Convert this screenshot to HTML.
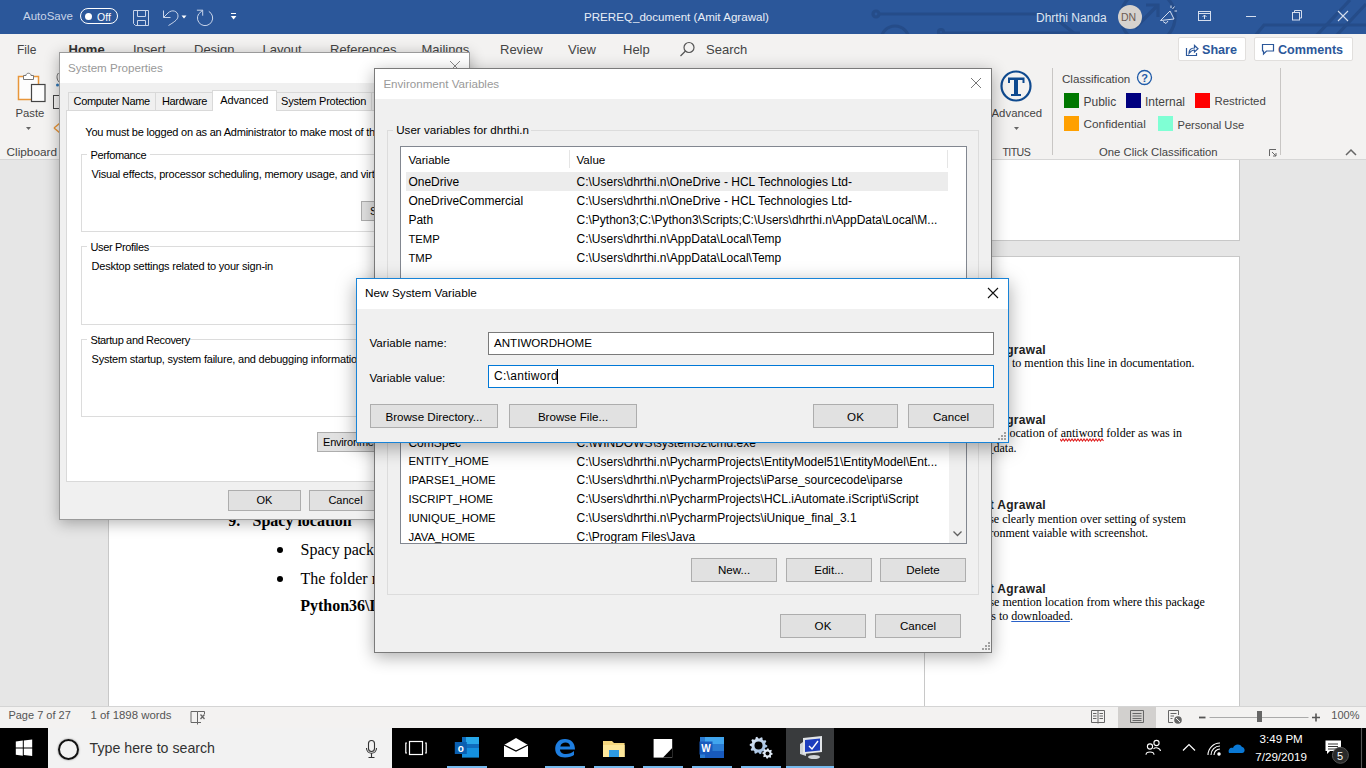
<!DOCTYPE html>
<html><head><meta charset="utf-8">
<style>
*{margin:0;padding:0;box-sizing:border-box}
html,body{width:1366px;height:768px;overflow:hidden;background:#e6e6e6;font-family:"Liberation Sans",sans-serif;position:relative}
.a{position:absolute}
.t{position:absolute;white-space:nowrap;line-height:1}
</style></head><body>
<div class="a" style="left:0px;top:0px;width:1366px;height:34px;background:#2b579a"></div>
<div class="a" style="left:0px;top:34px;width:1366px;height:126px;background:#f3f2f1"></div>
<div class="a" style="left:0px;top:160px;width:1366px;height:546px;background:#e6e6e6"></div>
<div class="a" style="left:0px;top:706px;width:1366px;height:22px;background:#f3f2f1;border-top:1px solid #d4d4d4"></div>
<div class="a" style="left:0px;top:728px;width:1366px;height:40px;background:#000"></div>
<svg class="a" style="left:0;top:0" width="1366" height="34" viewBox="0 0 1366 34">
<g stroke="#254c89" stroke-width="3.2" fill="none">
<circle cx="876" cy="14" r="3"/><path d="M879 14 H1050 L1075 34"/>
<circle cx="895" cy="40" r="14"/>
<circle cx="941" cy="32" r="2.5"/><path d="M943 33 H1080"/>
<circle cx="1148" cy="17" r="27"/>
<path d="M1135 28 L1158 5 M1146 5 H1158 V17"/>
<path d="M1255 36 L1264 25 H1366"/>
<path d="M1316 36 L1350 0 M1336 36 L1366 4"/>
</g></svg>
<div class="t" style="left:23px;top:11.27px;font-size:11.5px;color:#c8d4e8;">AutoSave</div>
<div class="a" style="left:80px;top:8px;width:38px;height:16px;border:1.5px solid #fff;border-radius:8px"></div>
<div class="a" style="left:84.5px;top:12.5px;width:7px;height:7px;background:#fff;border-radius:50%"></div>
<div class="t" style="left:97px;top:11.61px;font-size:10.5px;color:#fff;">Off</div>
<svg class="a" style="left:0;top:0" width="260" height="34" viewBox="0 0 260 34" fill="none" stroke="#c9d5ea" stroke-width="1">
<path d="M133.5 10.5 H148.5 V25.5 H135.5 L133.5 23.5 Z"/><path d="M137.5 10.5 V16.5 H145.5 V10.5"/><path d="M137.5 25.5 V20.5 H145.5 V25.5"/>
<path d="M163.5 10.5 V17.5 H170.5" /><path d="M163.5 17.5 L168 13 C172 9 178 11 178 16 C178 19 176 21 168.5 25.5"/>
<path d="M181.5 15.5 H186.5 L184 18.5 Z" fill="#fff" stroke="none"/>
<path d="M208.8 11.4 A7.6 7.6 0 1 1 198.6 14 L202.7 10.2"/><path d="M196.9 10.2 H202.7 V15.7"/>
<path d="M231 13.5 H236" stroke="#fff"/><path d="M230.8 16 H236.4 L233.6 19.5 Z" fill="#fff" stroke="none"/>
</svg>
<div class="t" style="left:584px;top:11.18px;font-size:11.6px;color:#e8eef7;">PREREQ_document (Amit Agrawal)</div>
<div class="t" style="left:1036px;top:11.54px;font-size:12px;color:#dfe6f2;">Dhrthi Nanda</div>
<div class="a" style="left:1118px;top:5px;width:24px;height:24px;border-radius:50%;background:#d6d2ce"></div>
<div class="t" style="left:1121px;top:12.11px;font-size:10.5px;color:#6b5b55;">DN</div>
<svg class="a" style="left:1150;top:0;left:1150px" width="216" height="34" viewBox="1150 0 216 34" fill="none" stroke="#d5deee" stroke-width="1">
<path d="M1160.5 20.5 L1170 11 L1174 19 Z M1163 21.5 L1166 23.5 L1168 21"/><path d="M1172.5 9 L1174.5 6.5 M1174.5 11 H1177 M1171 8 V5.5"/>
<rect x="1198.5" y="11.5" width="12" height="9"/><path d="M1198.5 13.5 H1210.5 M1204.5 19 V15 M1202.5 17 L1204.5 15 L1206.5 17"/>
<path d="M1246 16.5 H1256"/>
<rect x="1292.5" y="12.5" width="7" height="7.5"/><path d="M1294.5 12.5 V10.5 H1301.5 V18 H1299.5"/>
<path d="M1338 11 L1348 21 M1348 11 L1338 21" stroke-width="1.1"/>
</svg>
<div class="t" style="left:17px;top:43.84px;font-size:12px;color:#444;">File</div>
<div class="t" style="left:68.5px;top:43.00px;font-size:13px;color:#333;font-weight:700;">Home</div>
<div class="t" style="left:133px;top:43.00px;font-size:13px;color:#444;">Insert</div>
<div class="t" style="left:194px;top:43.00px;font-size:13px;color:#444;">Design</div>
<div class="t" style="left:262.5px;top:43.00px;font-size:13px;color:#444;">Layout</div>
<div class="t" style="left:330px;top:43.00px;font-size:13px;color:#444;">References</div>
<div class="t" style="left:421.5px;top:43.00px;font-size:13px;color:#444;">Mailings</div>
<div class="t" style="left:500px;top:43.00px;font-size:13px;color:#444;">Review</div>
<div class="t" style="left:568px;top:43.00px;font-size:13px;color:#444;">View</div>
<div class="t" style="left:623px;top:43.00px;font-size:13px;color:#444;">Help</div>
<div class="t" style="left:706px;top:43.00px;font-size:13px;color:#444;">Search</div>
<svg class="a" style="left:676px;top:40px" width="24" height="20" viewBox="676 40 24 20" fill="none" stroke="#555" stroke-width="1.2">
<circle cx="689" cy="47.5" r="5"/><path d="M685.5 51 L680.5 56"/></svg>
<div class="a" style="left:1178px;top:37px;width:68px;height:24px;background:#fff;border:1px solid #e1dfdd;border-radius:2px"></div>
<div class="a" style="left:1254px;top:37px;width:99px;height:24px;background:#fff;border:1px solid #e1dfdd;border-radius:2px"></div>
<div class="t" style="left:1202px;top:43.83px;font-size:12.6px;color:#2b579a;font-weight:700;">Share</div>
<div class="t" style="left:1278px;top:43.83px;font-size:12.6px;color:#2b579a;font-weight:700;">Comments</div>
<svg class="a" style="left:1180px;top:38px" width="100" height="24" viewBox="1180 38 100 24" fill="none" stroke="#2b579a" stroke-width="1.2">
<path d="M1186.5 48 V55.5 H1196.5 V53"/><path d="M1189 53.5 C1189 50 1191 48 1194.5 48 V45.5 L1198 48.8 L1194.5 52 V50 C1192 50 1190.5 51.5 1189 53.5 Z"/>
<path d="M1262.5 44.5 H1273.5 V51 H1266.5 L1263.5 54 V51 H1262.5 Z"/></svg>
<svg class="a" style="left:0;top:66px" width="60" height="94" viewBox="0 66 60 94">
<rect x="18.5" y="76.5" width="20" height="23" fill="#fdfdfd" stroke="#e8963a" stroke-width="1.5"/>
<path d="M23.5 79.5 V75.5 H26 C26 72.5 31 72.5 31 75.5 H33.5 V79.5 Z" fill="#fff" stroke="#777" stroke-width="1"/>
<rect x="31.5" y="84.5" width="13.5" height="17" fill="#fdfdfd" stroke="#444" stroke-width="1.2"/>
<path d="M26 127 H31 L28.5 130 Z" fill="#666"/>
<circle cx="57.5" cy="85" r="1.5" fill="#2e75b6"/><path d="M58.5 73 C56 76 57 80 59 82" stroke="#666" fill="none"/>
<rect x="53.5" y="95.5" width="8" height="13" fill="none" stroke="#444"/>
<path d="M54 128 L60 123 M54 128 L60 133" stroke="#e8963a" stroke-width="1.5" fill="none"/>
</svg>
<div class="t" style="left:15.5px;top:108.43px;font-size:11.3px;color:#444;">Paste</div>
<div class="t" style="left:6.5px;top:147.31px;font-size:11.8px;color:#444;">Clipboard</div>
<svg class="a" style="left:995px;top:66px" width="45" height="70" viewBox="995 66 45 70">
<circle cx="1016" cy="86" r="14.5" fill="none" stroke="#0f4a8f" stroke-width="2.2"/>
<path d="M1008 77.5 H1024.5 V83 H1022.5 V80 H1018 V94 H1021 V96 H1011 V94 H1014 V80 H1010 V83 H1008 Z" fill="#0f4a8f"/>
<path d="M1014 127 H1019 L1016.5 130 Z" fill="#666"/></svg>
<div class="t" style="left:991.5px;top:108.35px;font-size:11.4px;color:#444;">Advanced</div>
<div class="t" style="left:1002.5px;top:147.33px;font-size:10.6px;color:#444;letter-spacing:-0.6px;">TITUS</div>
<div class="a" style="left:1052px;top:68px;width:1px;height:87px;background:#c8c6c4"></div>
<div class="t" style="left:1062px;top:73.18px;font-size:11.6px;color:#444;">Classification</div>
<svg class="a" style="left:1135px;top:68px" width="20" height="20" viewBox="1135 68 20 20"><circle cx="1144.5" cy="77.5" r="7" fill="none" stroke="#1e5aa8" stroke-width="1.3"/>
<text x="1144.5" y="81.5" font-family="Liberation Sans" font-size="11" font-weight="700" fill="#1e5aa8" text-anchor="middle">?</text></svg>
<div class="a" style="left:1064px;top:93px;width:15px;height:15px;background:#007800"></div>
<div class="t" style="left:1083.5px;top:95.84px;font-size:12px;color:#444;">Public</div>
<div class="a" style="left:1126px;top:93px;width:15px;height:15px;background:#00007f"></div>
<div class="t" style="left:1145px;top:95.84px;font-size:12px;color:#444;">Internal</div>
<div class="a" style="left:1195px;top:93px;width:15px;height:15px;background:#ff0000"></div>
<div class="t" style="left:1214.5px;top:96.35px;font-size:11.4px;color:#444;">Restricted</div>
<div class="a" style="left:1064px;top:116px;width:15px;height:15px;background:#ffa000"></div>
<div class="t" style="left:1083.5px;top:119.01px;font-size:11.8px;color:#444;">Confidential</div>
<div class="a" style="left:1158px;top:116px;width:15px;height:15px;background:#7fffd4"></div>
<div class="t" style="left:1177.5px;top:119.60px;font-size:11.1px;color:#444;">Personal Use</div>
<div class="t" style="left:1099px;top:146.73px;font-size:11.3px;color:#444;">One Click Classification</div>
<svg class="a" style="left:1266px;top:146px" width="100" height="14" viewBox="1266 146 100 14" fill="none" stroke="#666">
<path d="M1269.5 156 V149.5 H1276"/><path d="M1272 152 L1276 156 M1276 153 V156 H1273"/>
<path d="M1346 155 L1351 150 L1356 155" stroke-width="1.5"/></svg>
<div class="a" style="left:1280px;top:68px;width:1px;height:87px;background:#c8c6c4"></div>
<div class="a" style="left:0px;top:159px;width:1366px;height:1px;background:#d6d6d6"></div>
<div class="a" style="left:108px;top:160px;width:1132px;height:81px;background:#fff;border-left:1px solid #c8c8c8;border-right:1px solid #c8c8c8;border-bottom:1px solid #c8c8c8"></div>
<div class="a" style="left:108px;top:256px;width:1132px;height:450px;background:#fff;border-left:1px solid #c8c8c8;border-right:1px solid #c8c8c8;border-top:1px solid #c8c8c8"></div>
<div class="a" style="left:924px;top:256px;width:1px;height:450px;background:#c8c8c8"></div>
<div class="t" style="left:228.3px;top:512.70px;font-size:16px;color:#000;font-weight:700;font-family:'Liberation Serif',serif;">9.</div>
<div class="t" style="left:252.5px;top:512.70px;font-size:16px;color:#000;font-weight:700;font-family:'Liberation Serif',serif;">Spacy location</div>
<div class="a" style="left:276.5px;top:547.3px;width:6px;height:6px;background:#000;border-radius:50%"></div>
<div class="a" style="left:276.5px;top:576.2px;width:6px;height:6px;background:#000;border-radius:50%"></div>
<div class="t" style="left:300.6px;top:542.10px;font-size:16px;color:#000;font-family:'Liberation Serif',serif;">Spacy package</div>
<div class="t" style="left:300.6px;top:570.50px;font-size:16px;color:#000;font-family:'Liberation Serif',serif;">The folder name</div>
<div class="t" style="left:300.2px;top:597.90px;font-size:16px;color:#000;font-weight:700;font-family:'Liberation Serif',serif;">Python36\Lib</div>
<div class="t" style="right:320px;top:344.04px;font-size:12px;color:#222;font-weight:700;letter-spacing:0.3px;">Amit Agrawal</div>
<div class="t" style="right:320px;top:413.94px;font-size:12px;color:#222;font-weight:700;letter-spacing:0.3px;">Amit Agrawal</div>
<div class="t" style="right:320px;top:498.84px;font-size:12px;color:#222;font-weight:700;letter-spacing:0.3px;">Amit Agrawal</div>
<div class="t" style="right:320px;top:582.64px;font-size:12px;color:#222;font-weight:700;letter-spacing:0.3px;">Amit Agrawal</div>
<div class="t" style="right:171.4000000000001px;top:357.25px;font-size:12px;color:#000;font-family:'Liberation Serif',serif;">Need to mention this line in documentation.</div>
<div class="t" style="right:184px;top:427.15px;font-size:12px;color:#000;font-family:'Liberation Serif',serif;">Please mention location of antiword folder as was in</div>
<div class="t" style="left:987.5px;top:441.55px;font-size:12px;color:#000;font-family:'Liberation Serif',serif;">_data.</div>
<div class="t" style="right:180.20000000000005px;top:512.55px;font-size:12px;color:#000;font-family:'Liberation Serif',serif;">Please clearly mention over setting of system</div>
<div class="t" style="right:218px;top:526.65px;font-size:12px;color:#000;font-family:'Liberation Serif',serif;">environment vaiable with screenshot.</div>
<div class="t" style="right:161.29999999999995px;top:596.15px;font-size:12px;color:#000;font-family:'Liberation Serif',serif;">Please mention location from where this package</div>
<div class="t" style="right:293.0999999999999px;top:610.25px;font-size:12px;color:#000;font-family:'Liberation Serif',serif;">needs to <u style="text-decoration-color:#2a62c9">downloaded</u>.</div>
<svg class="a" style="left:1060px;top:437px" width="45" height="5" viewBox="0 0 45 5"><path d="M0 2 L1.5 4 L3 2 L4.5 4 L6 2 L7.5 4 L9 2 L10.5 4 L12 2 L13.5 4 L15 2 L16.5 4 L18 2 L19.5 4 L21 2 L22.5 4 L24 2 L25.5 4 L27 2 L28.5 4 L30 2 L31.5 4 L33 2 L34.5 4 L36 2 L37.5 4 L39 2 L40.5 4 L42 2 L43.5 4" stroke="#e02020" stroke-width="1.2" fill="none"/></svg>
<div class="t" style="left:8.4px;top:710.19px;font-size:11px;color:#555;">Page 7 of 27</div>
<div class="t" style="left:90.5px;top:709.85px;font-size:11.4px;color:#555;">1 of 1898 words</div>
<svg class="a" style="left:185px;top:706px" width="30" height="22" viewBox="185 706 30 22" fill="none" stroke="#666">
<path d="M191 711.5 H197.5 V722.5 H191 Z M197.5 711.5 H204.5 V714 M197.5 722.5 H201 M197.5 722.5 V724.5"/><path d="M200.5 714.5 L204.5 719 M204.5 714.5 L200.5 719" stroke-width="1.3"/></svg>
<div class="a" style="left:1118px;top:707px;width:38px;height:21px;background:#d2d0ce"></div>
<svg class="a" style="left:1085px;top:706px" width="281" height="22" viewBox="1085 706 281 22" fill="none" stroke="#666" stroke-width="1">
<path d="M1091.5 710.5 H1104.5 V722.5 H1091.5 Z M1098 710.5 V723.5 M1093 713.5 H1096.5 M1093 716 H1096.5 M1093 718.5 H1096.5 M1099.5 713.5 H1103 M1099.5 716 H1103 M1099.5 718.5 H1103"/>
<path d="M1130.5 710.5 H1143.5 V722.5 H1130.5 Z M1132.5 713.5 H1141.5 M1132.5 716 H1141.5 M1132.5 718.5 H1141.5 M1132.5 720.5 H1141.5"/>
<path d="M1168.5 710.5 H1178.5 V715 M1168.5 710.5 V722.5 H1173 M1170.5 713.5 H1176.5 M1170.5 716 H1174 M1170.5 718.5 H1172.5"/>
<circle cx="1178" cy="720" r="3.8" fill="#666" stroke="none"/><path d="M1176 718 L1180 722" stroke="#f3f2f1"/>
<path d="M1199 717.5 H1205.5" stroke-width="1.8" stroke="#555"/>
<path d="M1209.5 717.5 H1308.5" stroke="#aaa"/>
<path d="M1312 717.5 H1320 M1316 713.5 V721.5" stroke-width="1.6" stroke="#555"/>
</svg>
<div class="a" style="left:1257px;top:711px;width:5px;height:11px;background:#666"></div>
<div class="t" style="left:1331.3px;top:710.49px;font-size:11px;color:#555;">100%</div>
<svg class="a" style="left:0;top:728px" width="60" height="40" viewBox="0 728 60 40" fill="#fff">
<path d="M15.8 741.5 L22.8 740.5 V747.6 H15.8 Z M23.8 740.4 L32.2 739.4 V747.6 H23.8 Z M15.8 748.6 H22.8 V755.7 L15.8 754.7 Z M23.8 748.6 H32.2 V756 L23.8 754.9 Z"/></svg>
<div class="a" style="left:48px;top:728px;width:344px;height:40px;background:#f2f2f2"></div>
<div class="a" style="left:57.5px;top:738.5px;width:21px;height:21px;border-radius:50%;border:2.6px solid #111;box-shadow:0 0 2px rgba(0,0,0,.5)"></div>
<div class="t" style="left:89.6px;top:741.48px;font-size:14.2px;color:#333;">Type here to search</div>
<svg class="a" style="left:360px;top:736px" width="24" height="24" viewBox="360 736 24 24" fill="none" stroke="#333" stroke-width="1.1">
<rect x="368.5" y="740.5" width="6" height="11" rx="3"/><path d="M366.5 748 C366.5 755 376.5 755 376.5 748 M371.5 753.5 V757.5 M368.5 757.5 H374.5"/></svg>
<svg class="a" style="left:395px;top:728px" width="450" height="40" viewBox="395 728 450 40">
<g fill="none" stroke="#fff" stroke-width="1.2"><rect x="409.5" y="741.5" width="13" height="13"/><path d="M407 743 H405.8 V753 H407 M425 743 H426.2 V753 H425"/></g>
<rect x="462" y="737" width="17" height="20" fill="#0f6cbd"/><rect x="466" y="737" width="13" height="7" fill="#28a8ea"/><path d="M462 748 L479 748 L479 757.6 L462 757.6 Z" fill="#1490df"/>
<rect x="454.8" y="742" width="12" height="12" fill="#0a5fb0"/><text x="460.8" y="752" font-family="Liberation Sans" font-size="10" font-weight="700" fill="#fff" text-anchor="middle">o</text>
<path d="M504 745 L516 738 L528 745 V757 H504 Z" fill="#fff"/><path d="M504 745 L516 751 L528 745" stroke="#000" stroke-width="1.2" fill="none"/>
<path d="M565 739 C558 739 555.2 744 555.2 749 C555.2 754 559 757.5 565 757.5 C569 757.5 572 756.5 574 755 V751 C572 753 569 754 566 754 C562 754 560 752 560 749.5 H575 C575 743 571 739 565 739 Z M560.3 746.5 C561 743.5 563 742.5 565.5 742.5 C568 742.5 570 743.8 570 746.5 Z" fill="#1e7ee0"/>
<path d="M603 741 H612 L614 743 H624.6 V757 H603 Z" fill="#f5d77e"/><path d="M603 745 H624.6 V757 H603 Z" fill="#fde79a"/><rect x="609" y="750" width="10" height="7" fill="#2d9be3"/>
<rect x="653.6" y="739" width="18.6" height="18.6" fill="#fff"/><path d="M672.2 748 L663 757.6 H672.2 Z" fill="#000"/>
<rect x="700" y="737" width="24" height="21" fill="#2b7cd3"/><rect x="705" y="737" width="19" height="7" fill="#41a5ee"/><rect x="705" y="751" width="19" height="7" fill="#185abd"/>
<rect x="699.5" y="741.5" width="13" height="13" fill="#185abd"/><text x="706" y="752" font-family="Liberation Sans" font-size="10" font-weight="700" fill="#fff" text-anchor="middle">W</text>
</g>
<g><defs><linearGradient id="gg" x1="0" y1="0" x2="1" y2="1"><stop offset="0" stop-color="#e6eef7"/><stop offset="1" stop-color="#8fb3dc"/></linearGradient></defs><path d="M767.30 745.50 L767.19 746.88 L765.16 747.66 L764.74 748.68 L765.62 750.67 L764.72 751.72 L762.61 751.16 L761.68 751.74 L761.22 753.87 L759.88 754.19 L758.50 752.50 L757.40 752.41 L755.78 753.87 L754.50 753.34 L754.39 751.16 L753.55 750.45 L751.38 750.67 L750.66 749.50 L751.84 747.66 L751.59 746.60 L749.70 745.50 L749.81 744.12 L751.84 743.34 L752.26 742.32 L751.38 740.33 L752.28 739.28 L754.39 739.84 L755.32 739.26 L755.78 737.13 L757.12 736.81 L758.50 738.50 L759.60 738.59 L761.22 737.13 L762.50 737.66 L762.61 739.84 L763.45 740.55 L765.62 740.33 L766.34 741.50 L765.16 743.34 L765.41 744.40 Z" fill="url(#gg)"/><circle cx="758.5" cy="745.5" r="4" fill="#000"/><path d="M772.70 753.50 L772.60 754.51 L771.20 755.03 L770.83 755.72 L771.18 757.18 L770.39 757.82 L769.03 757.20 L768.28 757.42 L767.50 758.70 L766.49 758.60 L765.97 757.20 L765.28 756.83 L763.82 757.18 L763.18 756.39 L763.80 755.03 L763.58 754.28 L762.30 753.50 L762.40 752.49 L763.80 751.97 L764.17 751.28 L763.82 749.82 L764.61 749.18 L765.97 749.80 L766.72 749.58 L767.50 748.30 L768.51 748.40 L769.03 749.80 L769.72 750.17 L771.18 749.82 L771.82 750.61 L771.20 751.97 L771.42 752.72 Z" fill="#dfe9f4"/><circle cx="767.5" cy="753.5" r="2" fill="#000"/></g>
</svg>
<div class="a" style="left:786px;top:728px;width:48px;height:40px;background:#393b3d"></div>
<svg class="a" style="left:795px;top:734px" width="30" height="28" viewBox="795 734 30 28">
<path d="M800 744 L806 740 V756 L800 754 Z" fill="#cfd3d6"/><path d="M803 738 L822 736 V752 L803 754 Z" fill="#e2e5e8"/><path d="M805 740 L820 738.5 V750.5 L805 752 Z" fill="#1c3dbd"/>
<path d="M809 746 L812 749 L818 741" stroke="#fff" stroke-width="1.4" fill="none"/><ellipse cx="814" cy="757" rx="6" ry="2" fill="#d0d3d6"/></svg>
<div class="a" style="left:447px;top:766px;width:40px;height:2px;background:#76b9ed"></div>
<div class="a" style="left:545px;top:766px;width:40px;height:2px;background:#76b9ed"></div>
<div class="a" style="left:594px;top:766px;width:40px;height:2px;background:#76b9ed"></div>
<div class="a" style="left:643px;top:766px;width:40px;height:2px;background:#76b9ed"></div>
<div class="a" style="left:692px;top:766px;width:40px;height:2px;background:#76b9ed"></div>
<div class="a" style="left:741px;top:766px;width:40px;height:2px;background:#76b9ed"></div>
<div class="a" style="left:786px;top:766px;width:48px;height:2px;background:#76b9ed"></div>
<svg class="a" style="left:1140px;top:728px" width="226" height="40" viewBox="1140 728 226 40" fill="none" stroke="#fff" stroke-width="1.1">
<circle cx="1150" cy="746.5" r="2.6"/><path d="M1146 754.8 C1146 751 1154 751 1154 754.8"/><circle cx="1156.5" cy="743" r="2.6"/><path d="M1153.5 749 C1155 747 1160 747.5 1160.5 751"/>
<path d="M1183 750.5 L1189 744.5 L1195 750.5" stroke-width="1.2"/>
<path d="M1208 755 A12 12 0 0 1 1220 743 M1211 755 A9 9 0 0 1 1220 746 M1214 755 A6 6 0 0 1 1220 749"/><circle cx="1219" cy="754" r="1.2" fill="#fff"/>
<path d="M1229 753 C1227.5 749 1231 747 1233 748 C1234 744 1240 743 1242 747 C1245 747 1246 753 1242 753 Z" fill="#0a78d4" stroke="none"/>
<path d="M1325.5 740.5 H1341 V751 H1330 L1327 754 V751 H1325.5 Z" fill="#fff" stroke="none"/><path d="M1328 744 H1338 M1328 746.5 H1338 M1328 749 H1336" stroke="#000" stroke-width="0.8"/>
<circle cx="1340.4" cy="755.3" r="8" fill="#2a2a2a" stroke="#555" stroke-width="1"/>
<path d="M1361.5 728 V768" stroke="#555"/>
</svg>
<div class="t" style="left:1336.9px;top:751.19px;font-size:11px;color:#fff;">5</div>
<div class="t" style="left:1259.6px;top:732.88px;font-size:11.6px;color:#fff;">3:49 PM</div>
<div class="t" style="left:1255.3px;top:750.98px;font-size:11.6px;color:#fff;">7/29/2019</div>
<div class="a" style="left:59px;top:52px;width:411px;height:468px;background:#f0f0f0;border:1px solid #9a9a9a;box-shadow:0 3px 14px rgba(0,0,0,.30)"></div>
<div class="a" style="left:60px;top:53px;width:409px;height:30px;background:#fff"></div>
<div class="t" style="left:68.1px;top:62.08px;font-size:11.6px;color:#999;">System Properties</div>
<svg class="a" style="left:445px;top:56px" width="20" height="20" viewBox="445 56 20 20"><path d="M450 61 L460 71 M460 61 L450 71" stroke="#888" stroke-width="1"/></svg>
<div class="a" style="left:68px;top:92px;width:88px;height:19px;background:#f0f0f0;border:1px solid #d9d9d9;border-bottom:none"></div>
<div class="a" style="left:155px;top:92px;width:58px;height:19px;background:#f0f0f0;border:1px solid #d9d9d9;border-bottom:none"></div>
<div class="a" style="left:276px;top:92px;width:96px;height:19px;background:#f0f0f0;border:1px solid #d9d9d9;border-bottom:none"></div>
<div class="a" style="left:371px;top:92px;width:70px;height:19px;background:#f0f0f0;border:1px solid #d9d9d9;border-bottom:none"></div>
<div class="a" style="left:66px;top:110px;width:396px;height:372px;background:#fff;border:1px solid #d9d9d9"></div>
<div class="a" style="left:212px;top:90px;width:65px;height:21px;background:#fff;border:1px solid #d9d9d9;border-bottom:none"></div>
<div class="t" style="left:73.6px;top:96.29px;font-size:11px;color:#000;letter-spacing:-0.35px;">Computer Name</div>
<div class="t" style="left:161.9px;top:96.29px;font-size:11px;color:#000;letter-spacing:-0.3px;">Hardware</div>
<div class="t" style="left:220.2px;top:94.69px;font-size:11px;color:#000;letter-spacing:-0.1px;">Advanced</div>
<div class="t" style="left:281.1px;top:96.29px;font-size:11px;color:#000;letter-spacing:-0.25px;">System Protection</div>
<div class="t" style="left:376px;top:96.29px;font-size:11px;color:#000;letter-spacing:-0.25px;">Remote</div>
<div class="t" style="left:85.3px;top:126.89px;font-size:11px;color:#000;letter-spacing:-0.22px;">You must be logged on as an Administrator to make most of these changes.</div>
<div class="a" style="left:81px;top:154px;width:374px;height:78px;border:1px solid #dcdcdc"></div>
<div class="a" style="left:87.4px;top:151px;width:63px;height:6px;background:#fff"></div>
<div class="t" style="left:90.4px;top:150.39px;font-size:11px;color:#000;letter-spacing:-0.35px;">Perfomance</div>
<div class="t" style="left:91.6px;top:168.59px;font-size:11px;color:#000;letter-spacing:-0.22px;">Visual effects, processor scheduling, memory usage, and virtual memory</div>
<div class="a" style="left:361px;top:201px;width:75px;height:20px;background:#e1e1e1;border:1px solid #adadad"></div>
<div class="t" style="left:370px;top:206.19px;font-size:11px;color:#000;">Settings...</div>
<div class="a" style="left:81px;top:246px;width:374px;height:79px;border:1px solid #dcdcdc"></div>
<div class="a" style="left:87.4px;top:243px;width:63px;height:6px;background:#fff"></div>
<div class="t" style="left:90.4px;top:241.69px;font-size:11px;color:#000;letter-spacing:-0.35px;">User Profiles</div>
<div class="t" style="left:91.6px;top:261.29px;font-size:11px;color:#000;letter-spacing:-0.22px;">Desktop settings related to your sign-in</div>
<div class="a" style="left:81px;top:339px;width:374px;height:78px;border:1px solid #dcdcdc"></div>
<div class="a" style="left:87.4px;top:336px;width:102px;height:6px;background:#fff"></div>
<div class="t" style="left:90.4px;top:334.69px;font-size:11px;color:#000;letter-spacing:-0.35px;">Startup and Recovery</div>
<div class="t" style="left:91.6px;top:354.39px;font-size:11px;color:#000;letter-spacing:-0.22px;">System startup, system failure, and debugging information</div>
<div class="a" style="left:317px;top:432px;width:119px;height:20px;background:#e1e1e1;border:1px solid #adadad"></div>
<div class="t" style="left:323px;top:437.19px;font-size:11px;color:#000;letter-spacing:-0.2px;">Environment Variables...</div>
<div class="a" style="left:228px;top:490px;width:73px;height:21px;background:#e1e1e1;border:1px solid #adadad"></div>
<div class="t" style="left:228px;width:73px;text-align:center;top:495.49px;font-size:11px;color:#000">OK</div>
<div class="a" style="left:309px;top:490px;width:73px;height:21px;background:#e1e1e1;border:1px solid #adadad"></div>
<div class="t" style="left:309px;width:73px;text-align:center;top:495.49px;font-size:11px;color:#000">Cancel</div>
<div class="a" style="left:390px;top:490px;width:73px;height:21px;background:#e1e1e1;border:1px solid #adadad"></div>
<div class="t" style="left:390px;width:73px;text-align:center;top:495.49px;font-size:11px;color:#000">Apply</div>
<div class="a" style="left:374px;top:68px;width:618px;height:585px;background:#f0f0f0;border:1px solid #7a7a7a;box-shadow:0 4px 16px rgba(0,0,0,.32)"></div>
<div class="a" style="left:375px;top:69px;width:616px;height:30px;background:#fff"></div>
<div class="t" style="left:383.4px;top:77.68px;font-size:11.6px;color:#999;">Environment Variables</div>
<svg class="a" style="left:966px;top:73px" width="20" height="20" viewBox="966 73 20 20"><path d="M971 78 L981 88 M981 78 L971 88" stroke="#777" stroke-width="1"/></svg>
<div class="a" style="left:387px;top:130px;width:592px;height:192px;border:1px solid #dcdcdc"></div>
<div class="a" style="left:393.25px;top:127px;width:138px;height:7px;background:#f0f0f0"></div>
<div class="t" style="left:396.25px;top:123.78px;font-size:11.6px;color:#000;">User variables for dhrthi.n</div>
<div class="a" style="left:400px;top:146px;width:567px;height:160px;background:#fff;border:1px solid #828790"></div>
<div class="a" style="left:569px;top:150px;width:1px;height:18px;background:#e5e5e5"></div>
<div class="a" style="left:947px;top:150px;width:1px;height:18px;background:#e5e5e5"></div>
<div class="t" style="left:408.4px;top:154.48px;font-size:11.6px;color:#000;">Variable</div>
<div class="t" style="left:576.5px;top:154.48px;font-size:11.6px;color:#000;">Value</div>
<div class="a" style="left:406px;top:172px;width:542px;height:19px;background:#ececec"></div>
<div class="t" style="left:408.4px;top:176.24px;font-size:12px;color:#000;">OneDrive</div>
<div class="t" style="left:576.5px;top:176.24px;font-size:12px;color:#000;">C:\Users\dhrthi.n\OneDrive - HCL Technologies Ltd-</div>
<div class="t" style="left:408.4px;top:195.24px;font-size:12px;color:#000;">OneDriveCommercial</div>
<div class="t" style="left:576.5px;top:195.24px;font-size:12px;color:#000;">C:\Users\dhrthi.n\OneDrive - HCL Technologies Ltd-</div>
<div class="t" style="left:408.4px;top:214.24px;font-size:12px;color:#000;">Path</div>
<div class="t" style="left:576.5px;top:214.24px;font-size:12px;color:#000;">C:\Python3;C:\Python3\Scripts;C:\Users\dhrthi.n\AppData\Local\M...</div>
<div class="t" style="left:408.4px;top:233.83px;font-size:11.3px;color:#000;">TEMP</div>
<div class="t" style="left:576.5px;top:233.24px;font-size:12px;color:#000;">C:\Users\dhrthi.n\AppData\Local\Temp</div>
<div class="t" style="left:408.4px;top:252.83px;font-size:11.3px;color:#000;">TMP</div>
<div class="t" style="left:576.5px;top:252.24px;font-size:12px;color:#000;">C:\Users\dhrthi.n\AppData\Local\Temp</div>
<div class="a" style="left:387px;top:330px;width:592px;height:265px;border:1px solid #dcdcdc"></div>
<div class="a" style="left:393.25px;top:327px;width:95px;height:7px;background:#f0f0f0"></div>
<div class="t" style="left:396.25px;top:323.78px;font-size:11.6px;color:#000;">System variables</div>
<div class="a" style="left:400px;top:347px;width:567px;height:197px;background:#fff;border:1px solid #828790"></div>
<div class="a" style="left:949px;top:348px;width:17px;height:195px;background:#f0f0f0"></div>
<svg class="a" style="left:949px;top:525px" width="17" height="17" viewBox="949 525 17 17"><path d="M953.5 531.5 L957.5 535.5 L961.5 531.5" stroke="#606060" stroke-width="1.3" fill="none"/></svg>
<div class="a" style="left:401px;top:348px;width:548px;height:195px;overflow:hidden">
<div class="t" style="left:7.4px;top:88.84px;font-size:12px;color:#000">ComSpec</div>
<div class="t" style="left:175.5px;top:88.84px;font-size:12px;color:#000">C:\WINDOWS\system32\cmd.exe</div>
<div class="t" style="left:7.4px;top:108.43px;font-size:11.3px;color:#000">ENTITY_HOME</div>
<div class="t" style="left:175.5px;top:107.84px;font-size:12px;color:#000">C:\Users\dhrthi.n\PycharmProjects\EntityModel51\EntityModel\Ent...</div>
<div class="t" style="left:7.4px;top:127.03px;font-size:11.3px;color:#000">IPARSE1_HOME</div>
<div class="t" style="left:175.5px;top:126.44px;font-size:12px;color:#000">C:\Users\dhrthi.n\PycharmProjects\iParse_sourcecode\iparse</div>
<div class="t" style="left:7.4px;top:146.03px;font-size:11.3px;color:#000">ISCRIPT_HOME</div>
<div class="t" style="left:175.5px;top:145.44px;font-size:12px;color:#000">C:\Users\dhrthi.n\PycharmProjects\HCL.iAutomate.iScript\iScript</div>
<div class="t" style="left:7.4px;top:164.83px;font-size:11.3px;color:#000">IUNIQUE_HOME</div>
<div class="t" style="left:175.5px;top:164.24px;font-size:12px;color:#000">C:\Users\dhrthi.n\PycharmProjects\iUnique_final_3.1</div>
<div class="t" style="left:7.4px;top:183.83px;font-size:11.3px;color:#000">JAVA_HOME</div>
<div class="t" style="left:175.5px;top:183.24px;font-size:12px;color:#000">C:\Program Files\Java</div>
</div>
<div class="a" style="left:691px;top:558px;width:86px;height:24px;background:#e1e1e1;border:1px solid #adadad"></div>
<div class="t" style="left:691px;width:86px;text-align:center;top:564.18px;font-size:11.6px;color:#000">New...</div>
<div class="a" style="left:786px;top:558px;width:86px;height:24px;background:#e1e1e1;border:1px solid #adadad"></div>
<div class="t" style="left:786px;width:86px;text-align:center;top:564.18px;font-size:11.6px;color:#000">Edit...</div>
<div class="a" style="left:880px;top:558px;width:86px;height:24px;background:#e1e1e1;border:1px solid #adadad"></div>
<div class="t" style="left:880px;width:86px;text-align:center;top:564.18px;font-size:11.6px;color:#000">Delete</div>
<div class="a" style="left:780px;top:614px;width:86px;height:24px;background:#e1e1e1;border:1px solid #adadad"></div>
<div class="t" style="left:780px;width:86px;text-align:center;top:620.38px;font-size:11.6px;color:#000">OK</div>
<div class="a" style="left:875px;top:614px;width:86px;height:24px;background:#e1e1e1;border:1px solid #adadad"></div>
<div class="t" style="left:875px;width:86px;text-align:center;top:620.38px;font-size:11.6px;color:#000">Cancel</div>
<svg class="a" style="left:982px;top:640px" width="10" height="12" viewBox="982 640 10 12" fill="#a0a0a0"><rect x="988" y="642" width="2" height="2"/><rect x="985" y="645" width="2" height="2"/><rect x="988" y="645" width="2" height="2"/><rect x="982" y="648" width="2" height="2"/><rect x="985" y="648" width="2" height="2"/><rect x="988" y="648" width="2" height="2"/></svg>
<div class="a" style="left:356px;top:278px;width:653px;height:165px;background:#f0f0f0;border:1px solid #1883d7;box-shadow:0 5px 18px rgba(0,0,0,.35)"></div>
<div class="a" style="left:357px;top:279px;width:651px;height:30px;background:#fff"></div>
<div class="t" style="left:365px;top:288.41px;font-size:11.8px;color:#000;">New System Variable</div>
<svg class="a" style="left:983px;top:283px" width="20" height="20" viewBox="983 283 20 20"><path d="M988 288 L998 298 M998 288 L988 298" stroke="#111" stroke-width="1.1"/></svg>
<div class="t" style="left:369.5px;top:337.48px;font-size:11.6px;color:#000;">Variable name:</div>
<div class="t" style="left:369.5px;top:371.58px;font-size:11.6px;color:#000;">Variable value:</div>
<div class="a" style="left:488px;top:332px;width:506px;height:23px;background:#fff;border:1px solid #7a7a7a"></div>
<div class="a" style="left:488px;top:365px;width:506px;height:23px;background:#fff;border:1px solid #0078d7"></div>
<div class="t" style="left:494px;top:336.98px;font-size:11.6px;color:#000;">ANTIWORDHOME</div>
<div class="t" style="left:494px;top:370.44px;font-size:12px;color:#000;letter-spacing:0.3px;">C:\antiword</div>
<div class="a" style="left:557px;top:369px;width:1px;height:15px;background:#000"></div>
<div class="a" style="left:370px;top:404px;width:128px;height:24px;background:#e1e1e1;border:1px solid #adadad"></div>
<div class="t" style="left:370px;width:128px;text-align:center;top:410.58px;font-size:11.6px;color:#000">Browse Directory...</div>
<div class="a" style="left:509px;top:404px;width:128px;height:24px;background:#e1e1e1;border:1px solid #adadad"></div>
<div class="t" style="left:509px;width:128px;text-align:center;top:410.58px;font-size:11.6px;color:#000">Browse File...</div>
<div class="a" style="left:813px;top:404px;width:85px;height:24px;background:#e1e1e1;border:1px solid #adadad"></div>
<div class="t" style="left:813px;width:85px;text-align:center;top:410.58px;font-size:11.6px;color:#000">OK</div>
<div class="a" style="left:908px;top:404px;width:86px;height:24px;background:#e1e1e1;border:1px solid #adadad"></div>
<div class="t" style="left:908px;width:86px;text-align:center;top:410.58px;font-size:11.6px;color:#000">Cancel</div>
<svg class="a" style="left:996px;top:430px" width="12" height="12" viewBox="996 430 12 12" fill="#a0a0a0"><rect x="1004" y="432" width="2" height="2"/><rect x="1001" y="435" width="2" height="2"/><rect x="1004" y="435" width="2" height="2"/><rect x="998" y="438" width="2" height="2"/><rect x="1001" y="438" width="2" height="2"/><rect x="1004" y="438" width="2" height="2"/></svg>
</body></html>
